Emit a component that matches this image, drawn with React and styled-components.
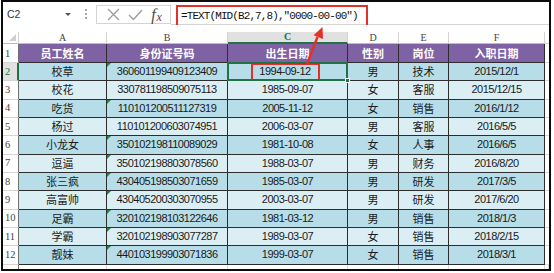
import React from 'react';
import styled, { createGlobalStyle } from 'styled-components';

const GlobalStyle = createGlobalStyle`
  html, body { margin: 0; padding: 0; background: #fff; }
  body { font-family: "Liberation Sans", "Noto Sans CJK SC", sans-serif; }
  * { box-sizing: border-box; }
`;

const Page = styled.div`
  position: relative;
  width: 554px;
  height: 273px;
  overflow: hidden;
  background: #fff;
`;

const Frame = styled.div`
  margin-left: 1px;
  width: 550px;
  height: 271px;
  border: 2px solid #0c0c0c;
  display: flex;
  flex-direction: column;
  background: #fff;
  overflow: hidden;
`;

const FormulaBar = styled.div`
  height: 23px;
  display: flex;
  align-items: flex-start;
  flex-shrink: 0;
`;

const NameBox = styled.div`
  width: 73px;
  height: 22px;
  margin-top: 1px;
  display: flex;
  align-items: center;
  justify-content: space-between;
  padding: 0 5px 0 4px;
  font-size: 10.5px;
  color: #333;
`;

const DropArrow = styled.span`
  width: 0;
  height: 0;
  border-left: 3px solid transparent;
  border-right: 3px solid transparent;
  border-top: 3px solid #555;
`;

const Dots = styled.div`
  width: 20px;
  height: 23px;
  display: flex;
  flex-direction: column;
  align-items: center;
  justify-content: center;
  gap: 2px;
  span {
    width: 2px;
    height: 2px;
    background: #a8a8a8;
  }
`;

const FuncBox = styled.div`
  width: 75px;
  height: 19px;
  margin-top: 3px;
  border: 1px solid #d4d4d4;
  display: flex;
  align-items: center;
  justify-content: space-around;
  padding: 0 4px 0 6px;
  background: #fff;
`;

const Fx = styled.span`
  font-family: "Liberation Serif", serif;
  font-style: italic;
  color: #4a4a4a;
  font-size: 16px;
  line-height: 1;
  display: flex;
  align-items: flex-end;
  sub {
    font-size: 12px;
    vertical-align: baseline;
    margin-left: 1px;
  }
`;

const FormulaInput = styled.div`
  flex: 1;
  height: 23px;
  border-bottom: 1px solid #d4d4d4;
  padding-left: 5px;
  display: flex;
  align-items: flex-start;
`;

const FormulaBox = styled.div`
  width: 192px;
  height: 22px;
  margin-top: 3px;
  border: 2px solid #e5302a;
  display: flex;
  align-items: center;
  padding-left: 3px;
  font-family: "Liberation Mono", monospace;
  font-size: 11px;
  letter-spacing: -0.9px;
  color: #111;
  white-space: nowrap;
`;

const Gap = styled.div`
  height: 7px;
  flex-shrink: 0;
  background: #fff;
`;

const Sheet = styled.div`
  flex: 1;
  display: grid;
  grid-template-columns: 16px 88px 121px 120px 51px 50px 96px 1fr;
  grid-template-rows: 12px 19px repeat(11, 18.33px) 1fr;
`;

const Corner = styled.div`
  position: relative;
  background: #fff;
  border-right: 1px solid #d0d0d0;
  border-bottom: 1px solid #bdbdbd;
  &::after {
    content: '';
    position: absolute;
    right: 2px;
    bottom: 2px;
    border-left: 7px solid transparent;
    border-bottom: 7px solid #cfcfcf;
  }
`;

const ColHead = styled.div`
  display: flex;
  align-items: center;
  justify-content: center;
  font-family: "Liberation Serif", serif;
  font-size: 10px;
  line-height: 1;
  color: ${p => (p.$active ? '#217346' : '#444')};
  font-weight: ${p => (p.$active ? 700 : 400)};
  background: ${p => (p.$active ? '#e1e1e1' : '#fff')};
  border-right: 1px solid #d5d5d5;
  border-bottom: ${p => (p.$active ? '2px solid #217346' : '1px solid #bdbdbd')};
`;

const RowNum = styled.div`
  display: flex;
  align-items: flex-end;
  padding: 0 0 3px 2px;
  font-family: "Liberation Serif", serif;
  font-size: 10.5px;
  line-height: 1;
  color: ${p => (p.$active ? '#217346' : '#444')};
  background: ${p => (p.$active ? '#e1e1e1' : '#fff')};
  border-bottom: 1px solid #d4d4d4;
  border-right: ${p => (p.$active ? '2px solid #217346' : '1px solid #6f6f6f')};
`;

const HeadCell = styled.div`
  display: flex;
  align-items: center;
  justify-content: center;
  background: #7f62a3;
  color: #fff;
  font-family: "Noto Sans CJK SC", sans-serif;
  font-size: 11px;
  font-weight: 700;
  line-height: 1;
  border-right: 1px solid #2d2d2d;
  border-bottom: 1px solid #2d2d2d;
`;

const DataCell = styled.div`
  position: relative;
  z-index: ${p => (p.$selected ? 2 : 0)};
  display: flex;
  align-items: center;
  justify-content: center;
  background: ${p => (p.$dark ? '#b6dde8' : '#dbeef4')};
  color: #1a1a1a;
  font-family: ${p => (p.$num ? '"Liberation Sans", sans-serif' : '"Noto Sans CJK SC", sans-serif')};
  font-size: 11px;
  letter-spacing: ${p => (p.$num ? '-0.5px' : '0')};
  line-height: 1;
  border-right: 1px solid #2d2d2d;
  border-bottom: 1px solid #2d2d2d;
  &::before {
    content: '';
    display: ${p => (p.$flag ? 'block' : 'none')};
    position: absolute;
    top: 0;
    left: 0;
    border-top: 4px solid #1b8a3c;
    border-right: 4px solid transparent;
  }
  &::after {
    content: '';
    display: ${p => (p.$selected ? 'block' : 'none')};
    position: absolute;
    top: -1px;
    left: -1px;
    right: -1px;
    bottom: -1px;
    border: 2px solid #217346;
  }
`;

const Handle = styled.span`
  position: absolute;
  right: -3px;
  bottom: -3px;
  width: 5px;
  height: 5px;
  background: #217346;
  border: 1px solid #fff;
  z-index: 3;
`;

const CellMark = styled.span`
  width: 69px;
  height: 18px;
  margin-right: 5px;
  border: 2px solid #e5302a;
  display: flex;
  align-items: center;
  justify-content: center;
`;

const FillCell = styled.div`
  background: #fff;
  border-bottom: 1px solid #dadada;
`;

const BottomCell = styled.div`
  background: #fff;
  border-right: 1px solid ${p => (p.$head ? '#6f6f6f' : '#dadada')};
`;

const Arrow = styled.svg`
  position: absolute;
  left: 0;
  top: 0;
  z-index: 5;
  pointer-events: none;
`;

const cols = ['A', 'B', 'C', 'D', 'E', 'F'];
const heads = ['员工姓名', '身份证号码', '出生日期', '性别', '岗位', '入职日期'];
const rows = [
  ['校草', '360601199409123409', '1994-09-12', '男', '技术', '2015/12/1'],
  ['校花', '330781198509075113', '1985-09-07', '女', '客服', '2015/12/15'],
  ['吃货', '110101200511127319', '2005-11-12', '女', '销售', '2016/1/12'],
  ['杨过', '110101200603074951', '2006-03-07', '男', '客服', '2016/5/5'],
  ['小龙女', '350102198110089029', '1981-10-08', '女', '人事', '2016/6/5'],
  ['逗逼', '350102198803078560', '1988-03-07', '男', '财务', '2016/8/20'],
  ['张三疯', '430405198503071659', '1985-03-07', '男', '研发', '2017/3/5'],
  ['高富帅', '430405200303070955', '2003-03-07', '男', '研发', '2017/6/20'],
  ['足霸', '320102198103122646', '1981-03-12', '男', '销售', '2018/1/3'],
  ['学霸', '320102198903077287', '1989-03-07', '女', '销售', '2018/2/15'],
  ['靓妹', '440103199903071836', '1999-03-07', '女', '销售', '2018/3/1'],
];
// rows 3 and 5 show no green "number stored as text" marker
const noFlag = [1, 3];
const numCols = [1, 2, 5];

export default function App() {
  return (
    <Page>
      <GlobalStyle />
      <Frame>
        <FormulaBar>
          <NameBox>
            C2
            <DropArrow />
          </NameBox>
          <Dots>
            <span />
            <span />
            <span />
          </Dots>
          <FuncBox>
            <svg width="13" height="13" viewBox="0 0 13 13">
              <path d="M1 1 L12 12 M12 1 L1 12" stroke="#9c9c9c" strokeWidth="1.3" fill="none" />
            </svg>
            <svg width="15" height="12" viewBox="0 0 15 12">
              <polyline points="1,6 5.5,10.5 14,1" stroke="#9c9c9c" strokeWidth="1.4" fill="none" />
            </svg>
            <Fx>
              f<sub>x</sub>
            </Fx>
          </FuncBox>
          <FormulaInput>
            <FormulaBox>=TEXT(MID(B2,7,8),"0000-00-00")</FormulaBox>
          </FormulaInput>
        </FormulaBar>
        <Gap />
        <Sheet>
          <Corner />
          {cols.map(c => (
            <ColHead key={c} $active={c === 'C'}>{c}</ColHead>
          ))}
          <FillCell />

          <RowNum>1</RowNum>
          {heads.map(h => (
            <HeadCell key={h}>{h}</HeadCell>
          ))}
          <FillCell />

          {rows.map((r, i) => (
            <React.Fragment key={r[1]}>
              <RowNum $active={i === 0}>{i + 2}</RowNum>
              {r.map((v, j) => (
                <DataCell
                  key={j}
                  $dark={i % 2 === 0}
                  $num={numCols.includes(j)}
                  $flag={j === 1 && !noFlag.includes(i)}
                  $selected={i === 0 && j === 2}
                >
                  {i === 0 && j === 2 ? (
                    <>
                      <CellMark>{v}</CellMark>
                      <Handle />
                    </>
                  ) : (
                    v
                  )}
                </DataCell>
              ))}
              <FillCell />
            </React.Fragment>
          ))}

          <BottomCell $head />
          {cols.map(c => (
            <BottomCell key={c} />
          ))}
          <BottomCell />
        </Sheet>
      </Frame>
      <Arrow width="554" height="273" viewBox="0 0 554 273">
        <line x1="307" y1="64" x2="317.5" y2="37" stroke="#e5302a" strokeWidth="2.5" />
        <polygon points="322.5,27 323,39 313.6,35.3" fill="#e5302a" />
      </Arrow>
    </Page>
  );
}
